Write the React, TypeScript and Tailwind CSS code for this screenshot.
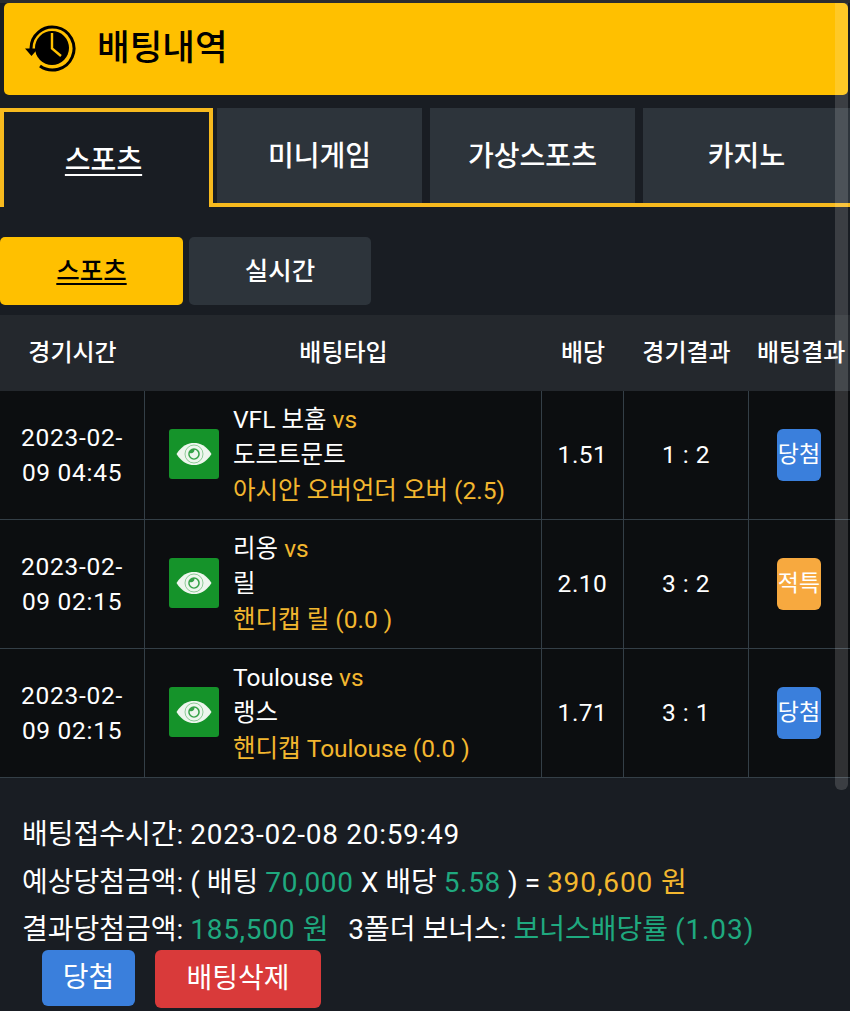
import React from 'react';

const font = { fontFamily: 'Roboto, "Noto Sans CJK KR", sans-serif' };

interface Bet {
  time: [string, string];
  home: string;
  away: string;
  pick: string;
  odds: string;
  score: string;
  result: string;
  resultClass: string;
}

const bets: Bet[] = [
  { time: ['2023-02-', '09 04:45'], home: 'VFL 보훔', away: '도르트문트', pick: '아시안 오버언더 오버 (2.5)', odds: '1.51', score: '1 : 2', result: '당첨', resultClass: 'bg-[#3a7fdc]' },
  { time: ['2023-02-', '09 02:15'], home: '리옹', away: '릴', pick: '핸디캡 릴 (0.0 )', odds: '2.10', score: '3 : 2', result: '적특', resultClass: 'bg-[#f7a93f]' },
  { time: ['2023-02-', '09 02:15'], home: 'Toulouse', away: '랭스', pick: '핸디캡 Toulouse (0.0 )', odds: '1.71', score: '3 : 1', result: '당첨', resultClass: 'bg-[#3a7fdc]' },
];

const columns = 'grid grid-cols-[145px_397px_82px_125px_101px]';

function HistoryIcon() {
  return (
    <svg viewBox="0 0 52 48" className="w-[52px] h-[48px]">
      <circle cx="28" cy="23" r="17" fill="#000" />
      <path d="M7 24 A 21.5 21.5 0 1 1 16 41" fill="none" stroke="#000" strokeWidth="3" />
      <path d="M1 23.5 H 14 L 7.5 31 Z" fill="#000" />
      <path d="M28 8 V 23.5 L 37 31" fill="none" stroke="#ffc000" strokeWidth="2.4" />
    </svg>
  );
}

function EyeIcon() {
  return (
    <svg viewBox="0 0 36 24" className="w-[36px] h-[24px]">
      <path d="M0.5 12 C 6 3.5 12 1 18 1 C 24 1 30 3.5 35.5 12 C 30 20.5 24 23 18 23 C 12 23 6 20.5 0.5 12 Z" fill="#eef6ee" />
      <circle cx="18" cy="12" r="9" fill="none" stroke="#15932a" strokeWidth="0.8" opacity="0.55" />
      <circle cx="18" cy="12" r="5.8" fill="#15932a" opacity="0.85" />
      <path d="M18.5 7.8 A 4.3 4.3 0 1 1 13.8 11 C 16 12 18.5 10.5 18.5 7.8 Z" fill="#eef6ee" />
    </svg>
  );
}

function BetRow({ bet }: { bet: Bet }) {
  return (
    <div className={`${columns} h-[129px] border-b border-[#343f47] bg-[#0c0e10] text-white text-[24.5px]`}>
      <div className="flex flex-col items-center justify-center leading-[35px] border-r border-[#343f47] tracking-[0.7px]">
        <span>{bet.time[0]}</span>
        <span>{bet.time[1]}</span>
      </div>
      <div className="flex items-center border-r border-[#343f47] pl-[24px] gap-[14px]">
        <div className="w-[50px] h-[50px] mb-[2px] rounded-[3px] bg-[#15932a] flex items-center justify-center shrink-0">
          <EyeIcon />
        </div>
        <div className="flex flex-col leading-[35.5px] whitespace-nowrap">
          <span>{bet.home} <span className="text-[#f3b72f]">vs</span></span>
          <span>{bet.away}</span>
          <span className="text-[#f3b72f]">{bet.pick}</span>
        </div>
      </div>
      <div className="flex items-center justify-center border-r border-[#343f47] tracking-[0.5px]">{bet.odds}</div>
      <div className="flex items-center justify-center border-r border-[#343f47] tracking-[0.5px]">{bet.score}</div>
      <div className="flex items-center pl-[28px]">
        <span className={`${bet.resultClass} w-[44px] h-[52px] rounded-[6px] flex items-center justify-center whitespace-nowrap text-[23px]`}>
          {bet.result}
        </span>
      </div>
    </div>
  );
}

export default function App() {
  return (
    <div className="relative w-[850px] h-[1011px] overflow-hidden bg-[#191d23] border-t-[3px] border-[#2b2d30]" style={font}>
      <div className="h-[92px] mx-[4px] mr-[2px] rounded-[5px] bg-[#ffc000] flex items-center pl-[20px] gap-[21px]">
        <HistoryIcon />
        <span className="text-[35.5px] font-medium text-black">배팅내역</span>
      </div>

      <div className="mt-[13px] flex h-[99px] text-white text-[28px] font-medium">
        <div className="w-[213px] border-x-4 border-t-4 border-[#f7ba1e] flex items-center justify-center underline underline-offset-[4px] decoration-[2px] pt-[3px] pr-[6px]">
          스포츠
        </div>
        <div className="flex-1 flex gap-[8px] pl-[4px] border-b-4 border-[#f7ba1e]">
          <div className="w-[205px] bg-[#2d343b] flex items-center justify-center pt-[3px]">미니게임</div>
          <div className="w-[205px] bg-[#2d343b] flex items-center justify-center pt-[3px]">가상스포츠</div>
          <div className="flex-1 bg-[#2d343b] flex items-center justify-center pt-[3px]">카지노</div>
        </div>
      </div>

      <div className="mt-[30px] flex gap-[6px] text-[25.5px] font-medium">
        <div className="w-[183px] h-[68px] rounded-[5px] bg-[#ffc000] text-black flex items-center justify-center underline underline-offset-[3px] decoration-[2px]">
          스포츠
        </div>
        <div className="w-[182px] h-[68px] rounded-[5px] bg-[#2d343b] text-white flex items-center justify-center">
          실시간
        </div>
      </div>

      <div className={`${columns} mt-[10px] h-[76px] bg-[#24282d] text-white text-[24px] font-medium`}>
        <div className="flex items-center justify-center">경기시간</div>
        <div className="flex items-center justify-center">배팅타입</div>
        <div className="flex items-center justify-center">배당</div>
        <div className="flex items-center justify-center">경기결과</div>
        <div className="flex items-center pl-[8px] whitespace-nowrap">배팅결과</div>
      </div>

      {bets.map((bet, i) => (
        <BetRow key={i} bet={bet} />
      ))}

      <div className="pt-[33px] pl-[22px] text-white text-[28px] leading-[47.5px] whitespace-nowrap">
        <div>배팅접수시간: <span className="tracking-[0.7px]">2023-02-08 20:59:49</span></div>
        <div>
          예상당첨금액: ( 배팅 <span className="text-[#1fa97f] tracking-[0.7px]">70,000</span> X 배당 <span className="text-[#1fa97f] tracking-[0.7px]">5.58</span> ) = <span className="text-[#f3b72f] tracking-[0.9px]">390,600 원</span>
        </div>
        <div>
          결과당첨금액: <span className="text-[#1fa97f] tracking-[0.7px]">185,500 원</span>
          <span className="ml-[19px]">3폴더 보너스: </span>
          <span className="text-[#1fa97f]">보너스배당률 <span className="tracking-[0.9px]">(1.03)</span></span>
        </div>
      </div>

      <div className="mt-[-4px] ml-[42px] flex items-start gap-[20px] text-white text-[28px]">
        <div className="w-[93px] h-[56px] rounded-[6px] bg-[#3a7fdc] flex items-center justify-center">당첨</div>
        <div className="w-[166px] h-[58px] rounded-[6px] bg-[#d93a3a] flex items-center justify-center">배팅삭제</div>
      </div>

      <div className="absolute right-[2px] top-[-3px] w-[13px] h-[790px] rounded-b-[6px] bg-white/15" />
    </div>
  );
}
